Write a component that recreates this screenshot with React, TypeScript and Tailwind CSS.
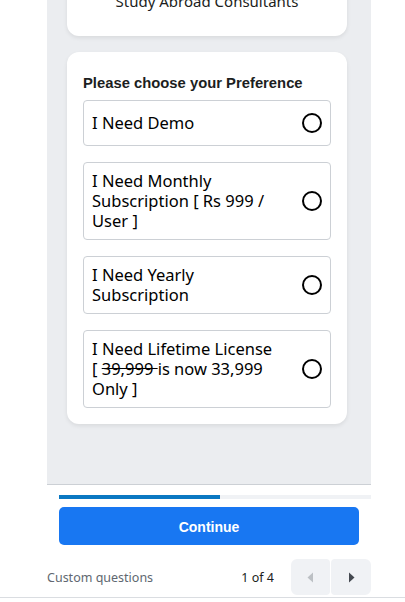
import React, { useState } from 'react';

const options = [
  { id: 'demo', label: <>I Need Demo</> },
  { id: 'monthly', label: <>I Need Monthly Subscription [ Rs 999 / User ]</> },
  { id: 'yearly', label: <>I Need Yearly Subscription</> },
  {
    id: 'lifetime',
    label: (
      <>
        I Need Lifetime License [ <span className="line-through">39,999 </span>is now 33,999 Only ]
      </>
    ),
  },
];

const App: React.FC = () => {
  const [selected, setSelected] = useState<string | null>(null);

  return (
    <div className="w-[405px] h-[602px] bg-white overflow-hidden font-['Noto_Sans',sans-serif] text-[#1c1e21]">
      <div className="ml-[47px] w-[324px]">
        {/* Scrolled form panel */}
        <div className="h-[485px] bg-[#ebedf0] border-b border-[#ccd0d5] pl-5 pr-6 overflow-hidden">
          {/* Intro card (scrolled past) */}
          <div className="-mt-[20px] bg-white rounded-xl shadow-[0_2px_4px_rgba(0,0,0,0.08)] h-[56px] flex justify-center pt-[11px]">
            <span className="text-[15px] leading-5">Study Abroad Consultants</span>
          </div>

          {/* Question card */}
          <div className="mt-4 bg-white rounded-xl shadow-[0_2px_4px_rgba(0,0,0,0.08)] px-4 pt-[22px] pb-4">
            <h2 className="font-['Liberation_Sans',sans-serif] font-bold text-[14.8px] leading-[18px] mb-[8px]">
              Please choose your Preference
            </h2>
            <div className="flex flex-col gap-4">
              {options.map((o) => (
                <button
                  key={o.id}
                  onClick={() => setSelected(o.id)}
                  className="min-h-[46px] border border-[#ccd0d5] rounded-[4px] pl-2 pr-2 py-2 flex items-center justify-between text-left"
                >
                  <span className="text-[16.5px] leading-5 text-black pr-3 w-[200px]">{o.label}</span>
                  <span className="w-5 h-5 shrink-0 rounded-full border-2 border-black flex items-center justify-center">
                    {selected === o.id && <span className="w-2.5 h-2.5 rounded-full bg-black" />}
                  </span>
                </button>
              ))}
            </div>
          </div>
        </div>

        {/* Progress */}
        <div className="mt-[10px] pl-3">
          <div className="h-1 bg-[#f0f2f5]">
            <div className="h-full bg-[#0a78c2]" style={{ width: '51.6%' }} />
          </div>
        </div>

        <div className="px-3 mt-2">
          <button className="w-full h-[38px] pt-[3px] rounded-[5px] bg-[#1877f2] text-white font-['Liberation_Sans',sans-serif] font-bold text-[14px]">
            Continue
          </button>
        </div>

        {/* Footer */}
        <div className="mt-[14px] h-9 flex items-center pt-[2px]">
          <span className="text-[12.5px] text-[#606770] flex-1">Custom questions</span>
          <span className="text-[12.5px] text-[#1c1e21] mr-[17px]">1 of 4</span>
          <div className="flex gap-[1px] -mt-[2px]">
            <button className="w-[39px] h-9 rounded-l-[6px] rounded-r-[4px] bg-[#f0f2f5] flex items-center justify-center">
              <svg width="7" height="11" viewBox="0 0 7 11">
                <path d="M6 0.5 L0.5 5.5 L6 10.5 Z" fill="#bcc0c4" />
              </svg>
            </button>
            <button className="w-[40px] h-9 rounded-r-[6px] rounded-l-[4px] bg-[#f0f2f5] flex items-center justify-center">
              <svg width="7" height="11" viewBox="0 0 7 11">
                <path d="M1 0.5 L6.5 5.5 L1 10.5 Z" fill="#444950" />
              </svg>
            </button>
          </div>
        </div>
      </div>
      <div className="mt-[2px] border-t border-[#dadde1]" />
    </div>
  );
};

export default App;
